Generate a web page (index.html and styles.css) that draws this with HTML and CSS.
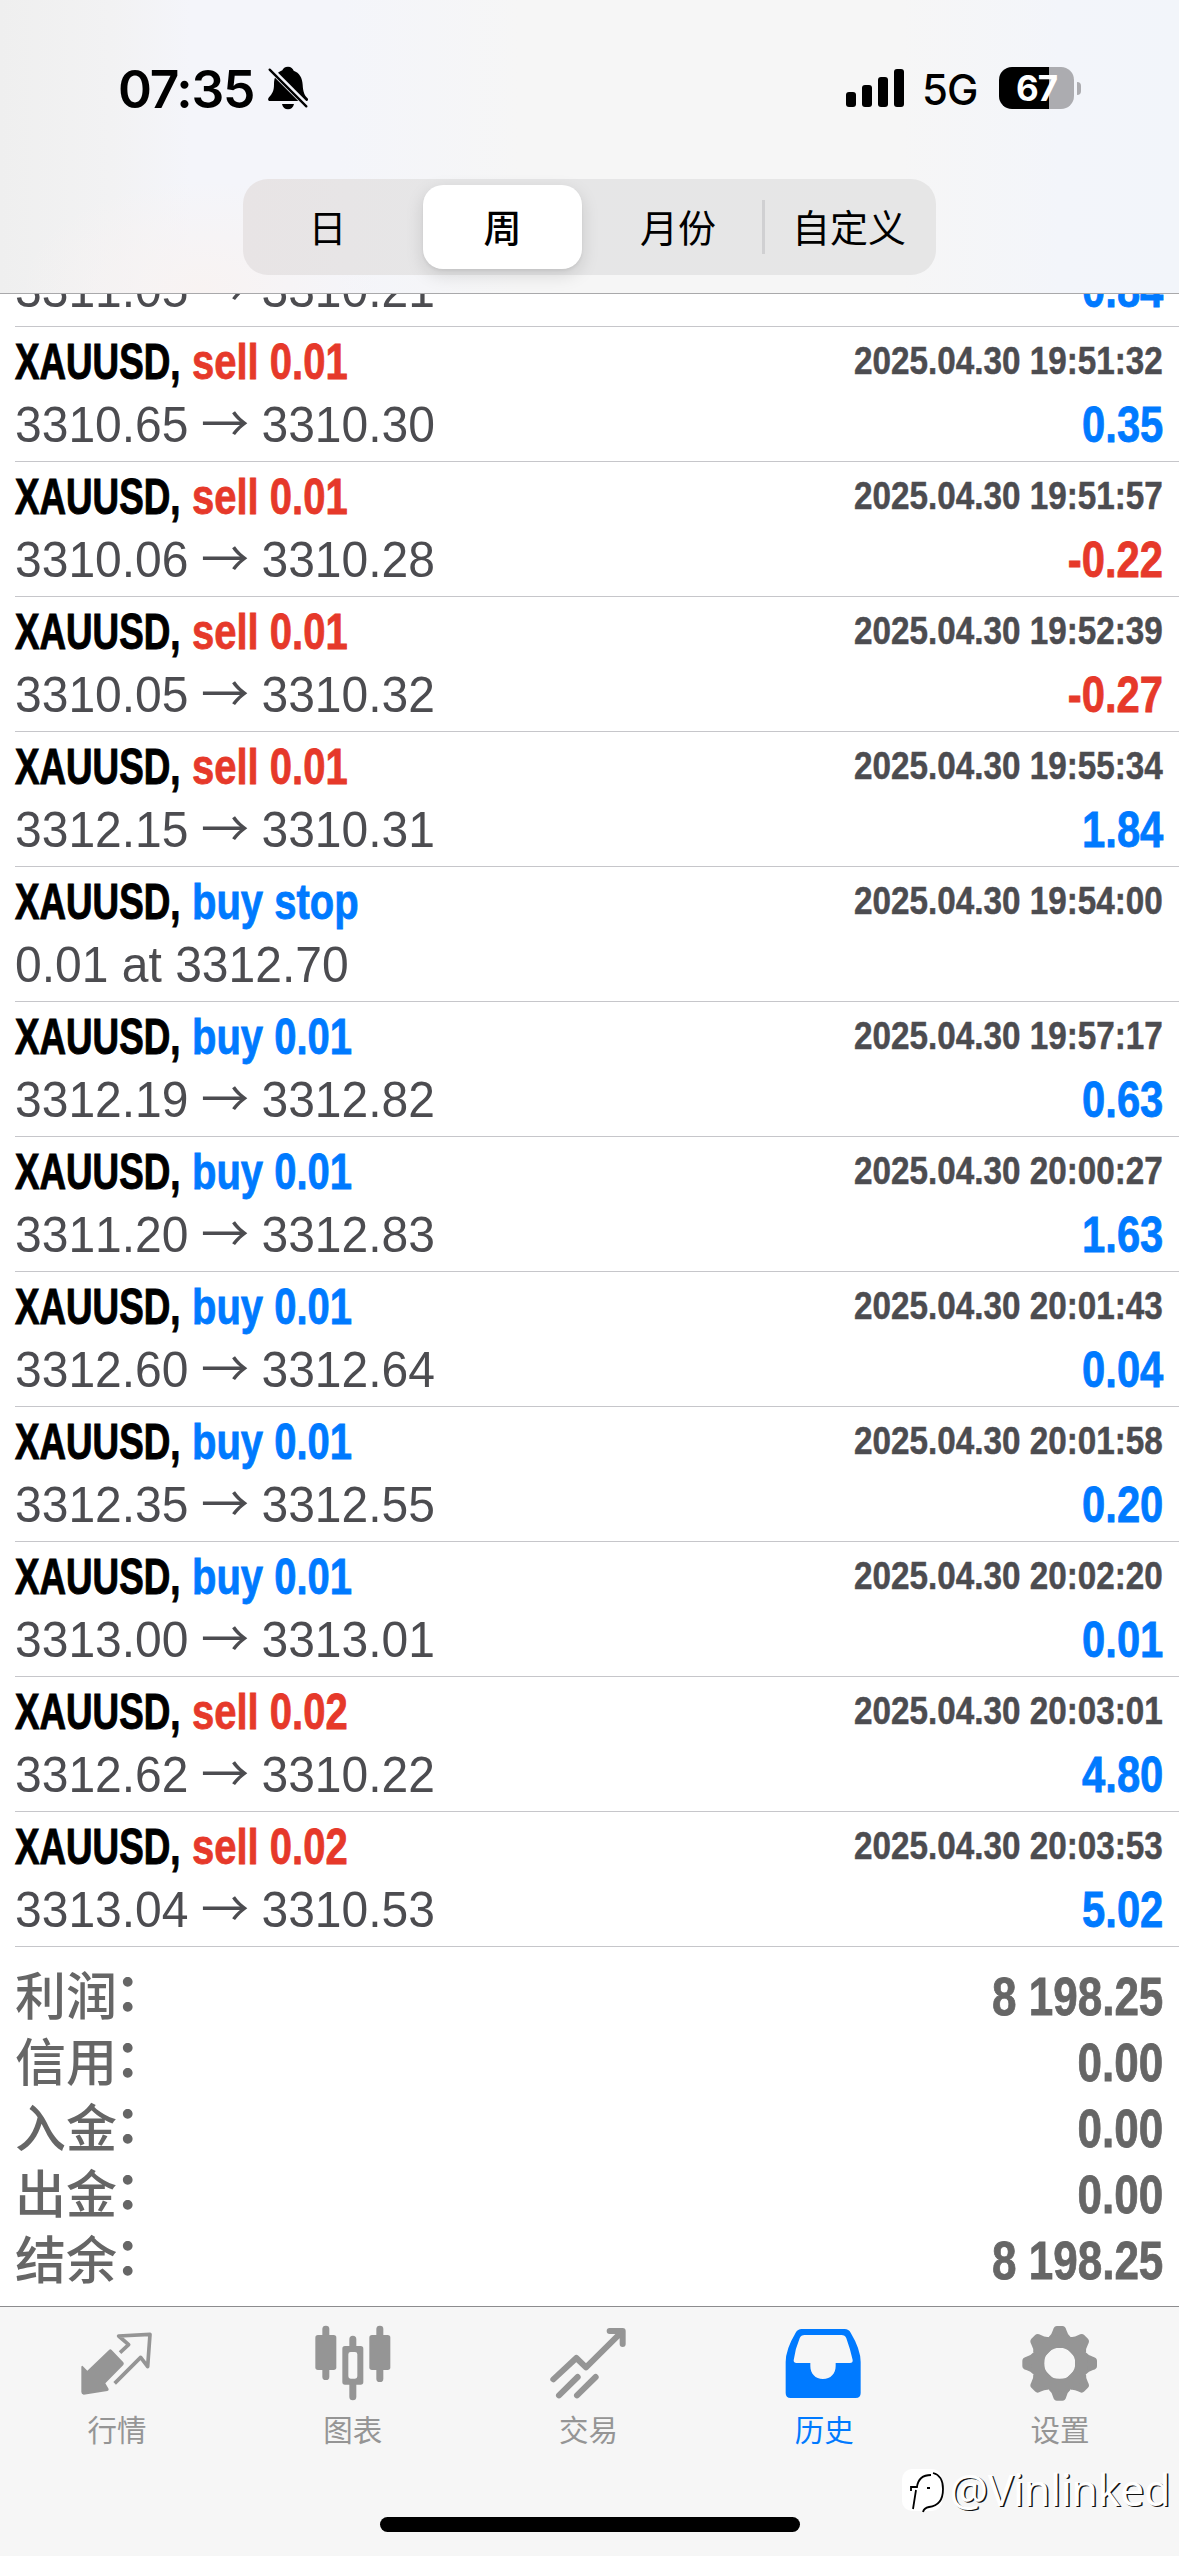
FILE: index.html
```html
<!DOCTYPE html>
<html lang="zh-CN">
<head>
<meta charset="utf-8">
<title>历史</title>
<link rel="stylesheet" href="styles.css">
</head>
<body>
<div class="screen">
  <header class="header">
    <div class="status">
      <span class="time">07:35</span>
      <svg class="bell" viewBox="0 0 120 132">
        <path d="M60 2c9 0 15 5 17 12 17 6 26 21 27 42 1 22 6 32 14 40 5 5 1 9-3 9H6c-7 0-7-6-3-11 10-11 15-18 15-39 0-22 8-36 25-42C45 7 51 2 60 2zM42 114h36c-2 10-9 16-18 16s-16-6-18-16z"/>
        <path class="bell-gap" d="M2 4 120 122"/>
        <path class="bell-slash" d="M5 11 115 121"/>
      </svg>
      <div class="status-right">
        <svg class="signal" viewBox="0 0 58 38"><rect y="23" width="10" height="15" rx="3"/><rect x="16" y="16" width="10" height="22" rx="3"/><rect x="32" y="8" width="10" height="30" rx="3"/><rect x="48" width="10" height="38" rx="3"/></svg>
        <span class="network">5G</span>
        <span class="battery">67</span>
        <span class="battery-tip"></span>
      </div>
    </div>
    <nav class="segments">
      <span class="segment day">日</span>
      <span class="segment selected">周</span>
      <span class="segment month">月份</span>
      <span class="segment custom">自定义</span>
    </nav>
  </header>

  <main class="content">
    <div class="clipped">
      <div class="deal"><div class="line"><span class="price">3311.05<i>→</i>3310.21</span><span class="profit buy">0.84</span></div></div>
    </div>
    <div class="deal"><div class="line"><span class="symbol">XAUUSD,</span><span class="side sell">sell 0.01</span><span class="date">2025.04.30 19:51:32</span></div><div class="line"><span class="price">3310.65<i>→</i>3310.30</span><span class="profit buy">0.35</span></div></div>
    <div class="deal"><div class="line"><span class="symbol">XAUUSD,</span><span class="side sell">sell 0.01</span><span class="date">2025.04.30 19:51:57</span></div><div class="line"><span class="price">3310.06<i>→</i>3310.28</span><span class="profit sell">-0.22</span></div></div>
    <div class="deal"><div class="line"><span class="symbol">XAUUSD,</span><span class="side sell">sell 0.01</span><span class="date">2025.04.30 19:52:39</span></div><div class="line"><span class="price">3310.05<i>→</i>3310.32</span><span class="profit sell">-0.27</span></div></div>
    <div class="deal"><div class="line"><span class="symbol">XAUUSD,</span><span class="side sell">sell 0.01</span><span class="date">2025.04.30 19:55:34</span></div><div class="line"><span class="price">3312.15<i>→</i>3310.31</span><span class="profit buy">1.84</span></div></div>
    <div class="deal"><div class="line"><span class="symbol">XAUUSD,</span><span class="side buy">buy stop</span><span class="date">2025.04.30 19:54:00</span></div><div class="line"><span class="price">0.01 at 3312.70</span></div></div>
    <div class="deal"><div class="line"><span class="symbol">XAUUSD,</span><span class="side buy">buy 0.01</span><span class="date">2025.04.30 19:57:17</span></div><div class="line"><span class="price">3312.19<i>→</i>3312.82</span><span class="profit buy">0.63</span></div></div>
    <div class="deal"><div class="line"><span class="symbol">XAUUSD,</span><span class="side buy">buy 0.01</span><span class="date">2025.04.30 20:00:27</span></div><div class="line"><span class="price">3311.20<i>→</i>3312.83</span><span class="profit buy">1.63</span></div></div>
    <div class="deal"><div class="line"><span class="symbol">XAUUSD,</span><span class="side buy">buy 0.01</span><span class="date">2025.04.30 20:01:43</span></div><div class="line"><span class="price">3312.60<i>→</i>3312.64</span><span class="profit buy">0.04</span></div></div>
    <div class="deal"><div class="line"><span class="symbol">XAUUSD,</span><span class="side buy">buy 0.01</span><span class="date">2025.04.30 20:01:58</span></div><div class="line"><span class="price">3312.35<i>→</i>3312.55</span><span class="profit buy">0.20</span></div></div>
    <div class="deal"><div class="line"><span class="symbol">XAUUSD,</span><span class="side buy">buy 0.01</span><span class="date">2025.04.30 20:02:20</span></div><div class="line"><span class="price">3313.00<i>→</i>3313.01</span><span class="profit buy">0.01</span></div></div>
    <div class="deal"><div class="line"><span class="symbol">XAUUSD,</span><span class="side sell">sell 0.02</span><span class="date">2025.04.30 20:03:01</span></div><div class="line"><span class="price">3312.62<i>→</i>3310.22</span><span class="profit buy">4.80</span></div></div>
    <div class="deal"><div class="line"><span class="symbol">XAUUSD,</span><span class="side sell">sell 0.02</span><span class="date">2025.04.30 20:03:53</span></div><div class="line"><span class="price">3313.04<i>→</i>3310.53</span><span class="profit buy">5.02</span></div></div>

    <section class="summary">
      <div class="total"><span class="label">利润<b>：</b></span><span class="amount">8 198.25</span></div>
      <div class="total"><span class="label">信用<b>：</b></span><span class="amount">0.00</span></div>
      <div class="total"><span class="label">入金<b>：</b></span><span class="amount">0.00</span></div>
      <div class="total"><span class="label">出金<b>：</b></span><span class="amount">0.00</span></div>
      <div class="total"><span class="label">结余<b>：</b></span><span class="amount">8 198.25</span></div>
    </section>
  </main>

  <footer class="tabbar">
    <div class="tabs">
      <div class="tab">
        <svg class="icon" viewBox="0 0 240 240"><path d="M93 84q4-4 8 0l35 37q3 4 0 8l-54 55 10 17q1 5-4 6l-71 11q-7-1-7-8v-74q0-6 4-4l14 14z"/><path class="outline" d="m126 92 26-24-30-26 94-5-7 97-21-28-78 78"/></svg>
        <span>行情</span>
      </div>
      <div class="tab">
        <svg class="icon" viewBox="0 0 240 240"><rect x="4" y="39" width="63" height="105" rx="8"/><rect x="25" y="11" width="21" height="163" rx="10"/><path fill-rule="evenodd" d="M93 72h47q8 0 8 8v100q0 8-8 8H93q-8 0-8-8V80q0-8 8-8zm17 18q-7 0-7 7v66q0 7 7 7h13q7 0 7-7V97q0-7-7-7z"/><path d="M106 74V52a10.500 10.500 0 0 1 21 0v22zM106 186v38a10.500 10.500 0 0 0 21 0v-38z"/><rect x="166" y="39" width="63" height="105" rx="8"/><rect x="187" y="11" width="21" height="169" rx="10"/></svg>
        <span>图表</span>
      </div>
      <div class="tab">
        <svg class="icon" viewBox="0 0 240 240"><path class="trend" d="m13 172 69-64 29 28L216 32M182 27h39v39M30 220l56-55M84 220l56-55"/></svg>
        <span>交易</span>
      </div>
      <div class="tab active">
        <svg class="icon" viewBox="0 0 240 240"><path fill-rule="evenodd" d="M50 21h129q12 0 18 11 30 50 30 88v93q0 15-15 15H17q-15 0-15-15v-93q0-38 30-88 6-11 18-11zm9 18q-11 0-15 10-14 33-18 66 0 8 8 8h42v9c0 23 15 39 38 39s38-16 38-39v-9h43q9 0 8-9-8-35-19-65-4-10-15-10z"/></svg>
        <span>历史</span>
      </div>
      <div class="tab">
        <svg class="icon" viewBox="0 0 240 240">
          <defs><path id="tooth" d="M84 44q8-6 12-20 3-12 12-12h16q9 0 12 12 4 14 12 20l-8 34H92z"/></defs>
          <use href="#tooth"/><use href="#tooth" transform="rotate(45 116 124)"/><use href="#tooth" transform="rotate(90 116 124)"/><use href="#tooth" transform="rotate(135 116 124)"/><use href="#tooth" transform="rotate(180 116 124)"/><use href="#tooth" transform="rotate(225 116 124)"/><use href="#tooth" transform="rotate(270 116 124)"/><use href="#tooth" transform="rotate(315 116 124)"/>
          <circle class="gear-ring" cx="116" cy="124" r="66"/>
        </svg>
        <span>设置</span>
      </div>
    </div>
    <div class="home"></div>
    <div class="credit">
      <svg class="credit-logo" viewBox="0 0 46 50"><rect class="tile" x="1" y="1" width="40" height="42" rx="10"/><path d="M12 41 15 22M10 23v-4h6c1-8 6-12 14-12M32 5c8 2 10 9 10 16 0 11-5 17-14 18q-5 1-6 5M26 20h3"/></svg>
      <span>@Vinlinked</span>
    </div>
  </footer>
</div>
</body>
</html>
```
FILE: styles.css
```css
* { box-sizing: border-box; }

body {
  margin: 0;
  background: #fff;
  font-family: "Liberation Sans", "Noto Sans CJK SC", sans-serif;
}

.screen {
  display: flex;
  flex-direction: column;
  width: 1179px;
  height: 2556px;
  overflow: hidden;
}

/* Header */
.header {
  flex: none;
  height: 294px;
  border-bottom: 1px solid #a9a9ab;
  background:
    radial-gradient(ellipse 180px 110px at 200px 290px, #f8f3f2, transparent),
    linear-gradient(90deg, #efefef 0, #f2f2f3 110px, #f4f5fa 190px, #f4f5fa 340px, #f6f6f6 520px, #f6f6f6 900px, #f3f5fa 1060px, #f2f5fa 100%);
}

.status {
  display: flex;
  align-items: center;
  height: 179px;
  padding: 0 98px 3px 118px;
}

.time {
  width: 150px;
  padding-top: 2px;
  font: 600 51.500px/60px Inter, sans-serif;
  letter-spacing: -1.300px;
}

.bell { width: 40px; height: 44px; }
.bell-gap { stroke: #f4f5fa; stroke-width: 17; }
.bell-slash { stroke: #000; stroke-width: 7; stroke-linecap: round; }

.status-right {
  display: flex;
  align-items: center;
  margin-left: auto;
}

.signal { width: 58px; height: 38px; }

.network {
  width: 57px;
  margin-left: 18px;
  padding-top: 3px;
  font: 500 42px/50px Inter, sans-serif;
  letter-spacing: -1px;
}

.battery {
  width: 75px;
  height: 42px;
  margin-left: 20px;
  border-radius: 13px;
  background: linear-gradient(90deg, #000 50px, #acacb0 50px);
  color: #fff;
  font: 700 35px/42px Inter, sans-serif;
  letter-spacing: -1px;
  text-align: center;
}

.battery-tip {
  width: 4px;
  height: 13px;
  margin-left: 3px;
  border-radius: 0 5px 5px 0;
  background: #acacb0;
}

.segments {
  display: flex;
  align-items: center;
  width: 693px;
  height: 96px;
  margin-left: 243px;
  padding: 0 6px;
  border-radius: 25px;
  background: linear-gradient(90deg, #e8e4e5, #e6e6e7 30%, #e6e6e6);
  font: 400 38px/84px "Noto Sans CJK SC", sans-serif;
}

.segment { width: 168px; text-align: center; }
.day { width: 174px; padding-right: 17px; }
.day, .month, .custom { padding-bottom: 2px; }

.selected {
  width: 159px;
  height: 84px;
  border-radius: 20px;
  background: #fff;
  box-shadow: 0 6px 18px rgba(0, 0, 0, .13), 0 2px 3px rgba(0, 0, 0, .05);
  font-weight: 500;
  line-height: 82px;
}

.month { width: 180px; padding-left: 12px; }

.custom {
  flex: 1;
  padding-left: 6px;
  background: linear-gradient(#d0d0d2, #d0d0d2) 0 50% / 3px 54px no-repeat;
}

/* Deals */
.content { flex: 1; min-height: 0; font-kerning: none; }

.clipped {
  display: flex;
  flex-direction: column;
  justify-content: flex-end;
  height: 33px;
  overflow: hidden;
}

.deal {
  flex: none;
  height: 135px;
  margin-left: 15px;
  padding: 4px 16px 0 0;
  border-bottom: 1px solid #c6c6ca;
}

.clipped .deal { height: 68px; padding-top: 0; }

.line {
  display: flex;
  height: 63px;
  line-height: 63px;
  font-size: 50px;
  white-space: nowrap;
}

.symbol {
  width: 177px;
  transform: scaleX(.735);
  transform-origin: 0 50%;
  font-weight: 700;
  -webkit-text-stroke: 1px currentColor;
}

.side {
  transform: scaleX(.8);
  transform-origin: 0 50%;
  font-weight: 700;
  -webkit-text-stroke: .8px currentColor;
}

.sell { color: #e6392a; }
.buy { color: #007aff; }

.date {
  margin-left: auto;
  transform: scaleX(.842);
  transform-origin: 100% 50%;
  color: #4c4c50;
  font-size: 39.500px;
  font-weight: 700;
  line-height: 59px;
  -webkit-text-stroke: .5px currentColor;
}

.price {
  transform: scaleX(.96);
  transform-origin: 0 50%;
  color: #4c4c50;
}

.price i {
  display: inline-block;
  width: 76px;
  text-align: center;
  font: 400 50px/50px "Noto Sans CJK SC", sans-serif;
}

.profit {
  margin-left: auto;
  transform: scaleX(.835);
  transform-origin: 100% 50%;
  font-weight: 700;
  -webkit-text-stroke: .8px currentColor;
}

/* Totals */
.summary { padding: 17px 16px 0 15px; }

.total {
  display: flex;
  justify-content: space-between;
  height: 66px;
  color: #666;
  font: 500 51px/66px "Noto Sans CJK SC", sans-serif;
}

.label { line-height: 58px; }

.total b {
  display: inline-block;
  font-weight: 700;
  transform: translate(-2px, -4px);
}

.amount {
  transform: scaleX(.83);
  transform-origin: 100% 50%;
  font: 700 53px/66px "Liberation Sans", sans-serif;
  -webkit-text-stroke: .8px currentColor;
}

/* Tab bar */
.tabbar {
  position: relative;
  flex: none;
  height: 250px;
  border-top: 1px solid #8c8c8e;
  background: #f6f6f6;
}

.tabs { display: flex; padding-top: 15px; }

.tab {
  display: flex;
  flex: 1;
  flex-direction: column;
  align-items: center;
  color: #959595;
  font: 400 29.500px/44px "Noto Sans CJK SC", sans-serif;
}

.tab span { padding-right: 2px; }

.active { color: #007aff; }

.icon {
  width: 80px;
  height: 80px;
  margin-bottom: 4px;
  fill: currentColor;
}

.outline, .trend, .gear-ring { fill: none; stroke: currentColor; }
.outline { stroke-width: 11; stroke-linejoin: round; }
.trend { stroke-width: 18; stroke-linecap: round; stroke-linejoin: round; }
.gear-ring { stroke-width: 38; }

.home {
  width: 420px;
  height: 15px;
  margin: 67px auto 0;
  border-radius: 8px;
  background: #000;
}

.credit {
  position: absolute;
  top: 155px;
  right: 9px;
  display: flex;
  align-items: center;
  color: #fff;
  font: 400 43px/56px "Noto Sans", sans-serif;
  letter-spacing: -.4px;
  text-shadow: 1.500px 1px 0 #111;
}

.credit-logo { width: 46px; height: 50px; margin: 6px 2px 0 0; fill: none; stroke: #000; stroke-width: 1.800; }
.tile { fill: #fff; stroke: none; }
```
